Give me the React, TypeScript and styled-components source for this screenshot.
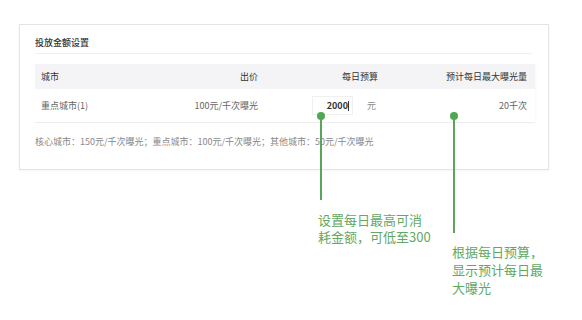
import React from "react";
import styled, { createGlobalStyle } from "styled-components";

const GlobalStyle = createGlobalStyle`
  html, body {
    margin: 0;
    padding: 0;
    background: #ffffff;
  }
  body {
    font-family: "Noto Sans CJK SC", "Noto Sans", "Liberation Sans", sans-serif;
  }
`;

const Page = styled.div`
  position: relative;
  width: 582px;
  height: 320px;
  padding: 24px 0 0 19px;
  box-sizing: border-box;
`;

const Card = styled.section`
  width: 530px;
  height: 146px;
  box-sizing: border-box;
  border: 1px solid #e4e4e4;
  box-shadow: 0 1px 2px rgba(0, 0, 0, 0.04);
  padding: 11px 0 0 15px;
  background: #fff;
`;

const Title = styled.h3`
  margin: 0;
  width: 497px;
  font-size: 9px;
  font-weight: 500;
  line-height: 14px;
  color: #333;
  padding-bottom: 3px;
  border-bottom: 1px solid #efefef;
`;

const Table = styled.div`
  margin-top: 10px;
  width: 500px;
  box-shadow: 1px 0 2px rgba(0, 0, 0, 0.03);
`;

const Row = styled.div<{ $head?: boolean }>`
  display: grid;
  grid-template-columns: 100px 117px 120px 149px;
  align-items: center;
  padding: 0 8px 0 6px;
  height: ${(p) => (p.$head ? "25px" : "33px")};
  background: ${(p) => (p.$head ? "#f4f4f6" : "#fff")};
  border-bottom: ${(p) => (p.$head ? "none" : "1px solid #eeeeee")};
  font-size: 9px;
  color: ${(p) => (p.$head ? "#333" : "#666")};
`;

const Cell = styled.div<{ $align?: "left" | "right" }>`
  display: flex;
  align-items: center;
  justify-content: ${(p) => (p.$align === "right" ? "flex-end" : "flex-start")};
  white-space: nowrap;
`;

const BudgetInput = styled.div`
  width: 41px;
  height: 19px;
  box-sizing: border-box;
  border: 1px solid #f0f0f0;
  display: flex;
  align-items: center;
  justify-content: flex-end;
  padding-right: 3px;
  color: #333;
  font-weight: 600;
`;

const Caret = styled.span`
  display: inline-block;
  width: 1px;
  height: 10px;
  background: #333;
  margin-left: 0;
`;

const Unit = styled.span`
  margin-left: 14px;
  margin-right: 2px;
  color: #888;
`;

const Note = styled.p`
  margin: 13px 0 0;
  font-size: 9px;
  line-height: 11px;
  color: #888;
  white-space: nowrap;
`;

const Callout = styled.div<{ $left: number; $top: number }>`
  position: absolute;
  left: ${(p) => p.$left}px;
  top: ${(p) => p.$top}px;
`;

const Pin = styled.div<{ $length: number }>`
  position: relative;
  width: 2px;
  height: ${(p) => p.$length}px;
  background: #5aa55a;

  &::before {
    content: "";
    position: absolute;
    left: -3px;
    top: -4px;
    width: 8px;
    height: 8px;
    border-radius: 50%;
    background: #4fa84f;
  }
`;

const CalloutText = styled.div<{ $lh: number; $left: number; $gap: number }>`
  margin-left: ${(p) => p.$left}px;
  margin-top: ${(p) => p.$gap}px;
  font-size: 13px;
  line-height: ${(p) => p.$lh}px;
  color: #62a862;
  white-space: nowrap;
`;

export default function App() {
  return (
    <>
      <GlobalStyle />
      <Page>
        <Card>
          <Title>投放金额设置</Title>
          <Table>
            <Row $head>
              <Cell>城市</Cell>
              <Cell $align="right">出价</Cell>
              <Cell $align="right">每日预算</Cell>
              <Cell $align="right">预计每日最大曝光量</Cell>
            </Row>
            <Row>
              <Cell>重点城市(1)</Cell>
              <Cell $align="right">100元/千次曝光</Cell>
              <Cell $align="right">
                <BudgetInput>
                  2000
                  <Caret />
                </BudgetInput>
                <Unit>元</Unit>
              </Cell>
              <Cell $align="right">20千次</Cell>
            </Row>
          </Table>
          <Note>
            核心城市：150元/千次曝光；重点城市：100元/千次曝光；其他城市：50元/千次曝光
          </Note>
        </Card>

        <Callout $left={320} $top={116}>
          <Pin $length={84} />
          <CalloutText $lh={17} $left={-2} $gap={11}>
            设置每日最高可消
            <br />
            耗金额，可低至300
          </CalloutText>
        </Callout>

        <Callout $left={453} $top={116}>
          <Pin $length={117} />
          <CalloutText $lh={18} $left={-1} $gap={10}>
            根据每日预算，
            <br />
            显示预计每日最
            <br />
            大曝光
          </CalloutText>
        </Callout>
      </Page>
    </>
  );
}
